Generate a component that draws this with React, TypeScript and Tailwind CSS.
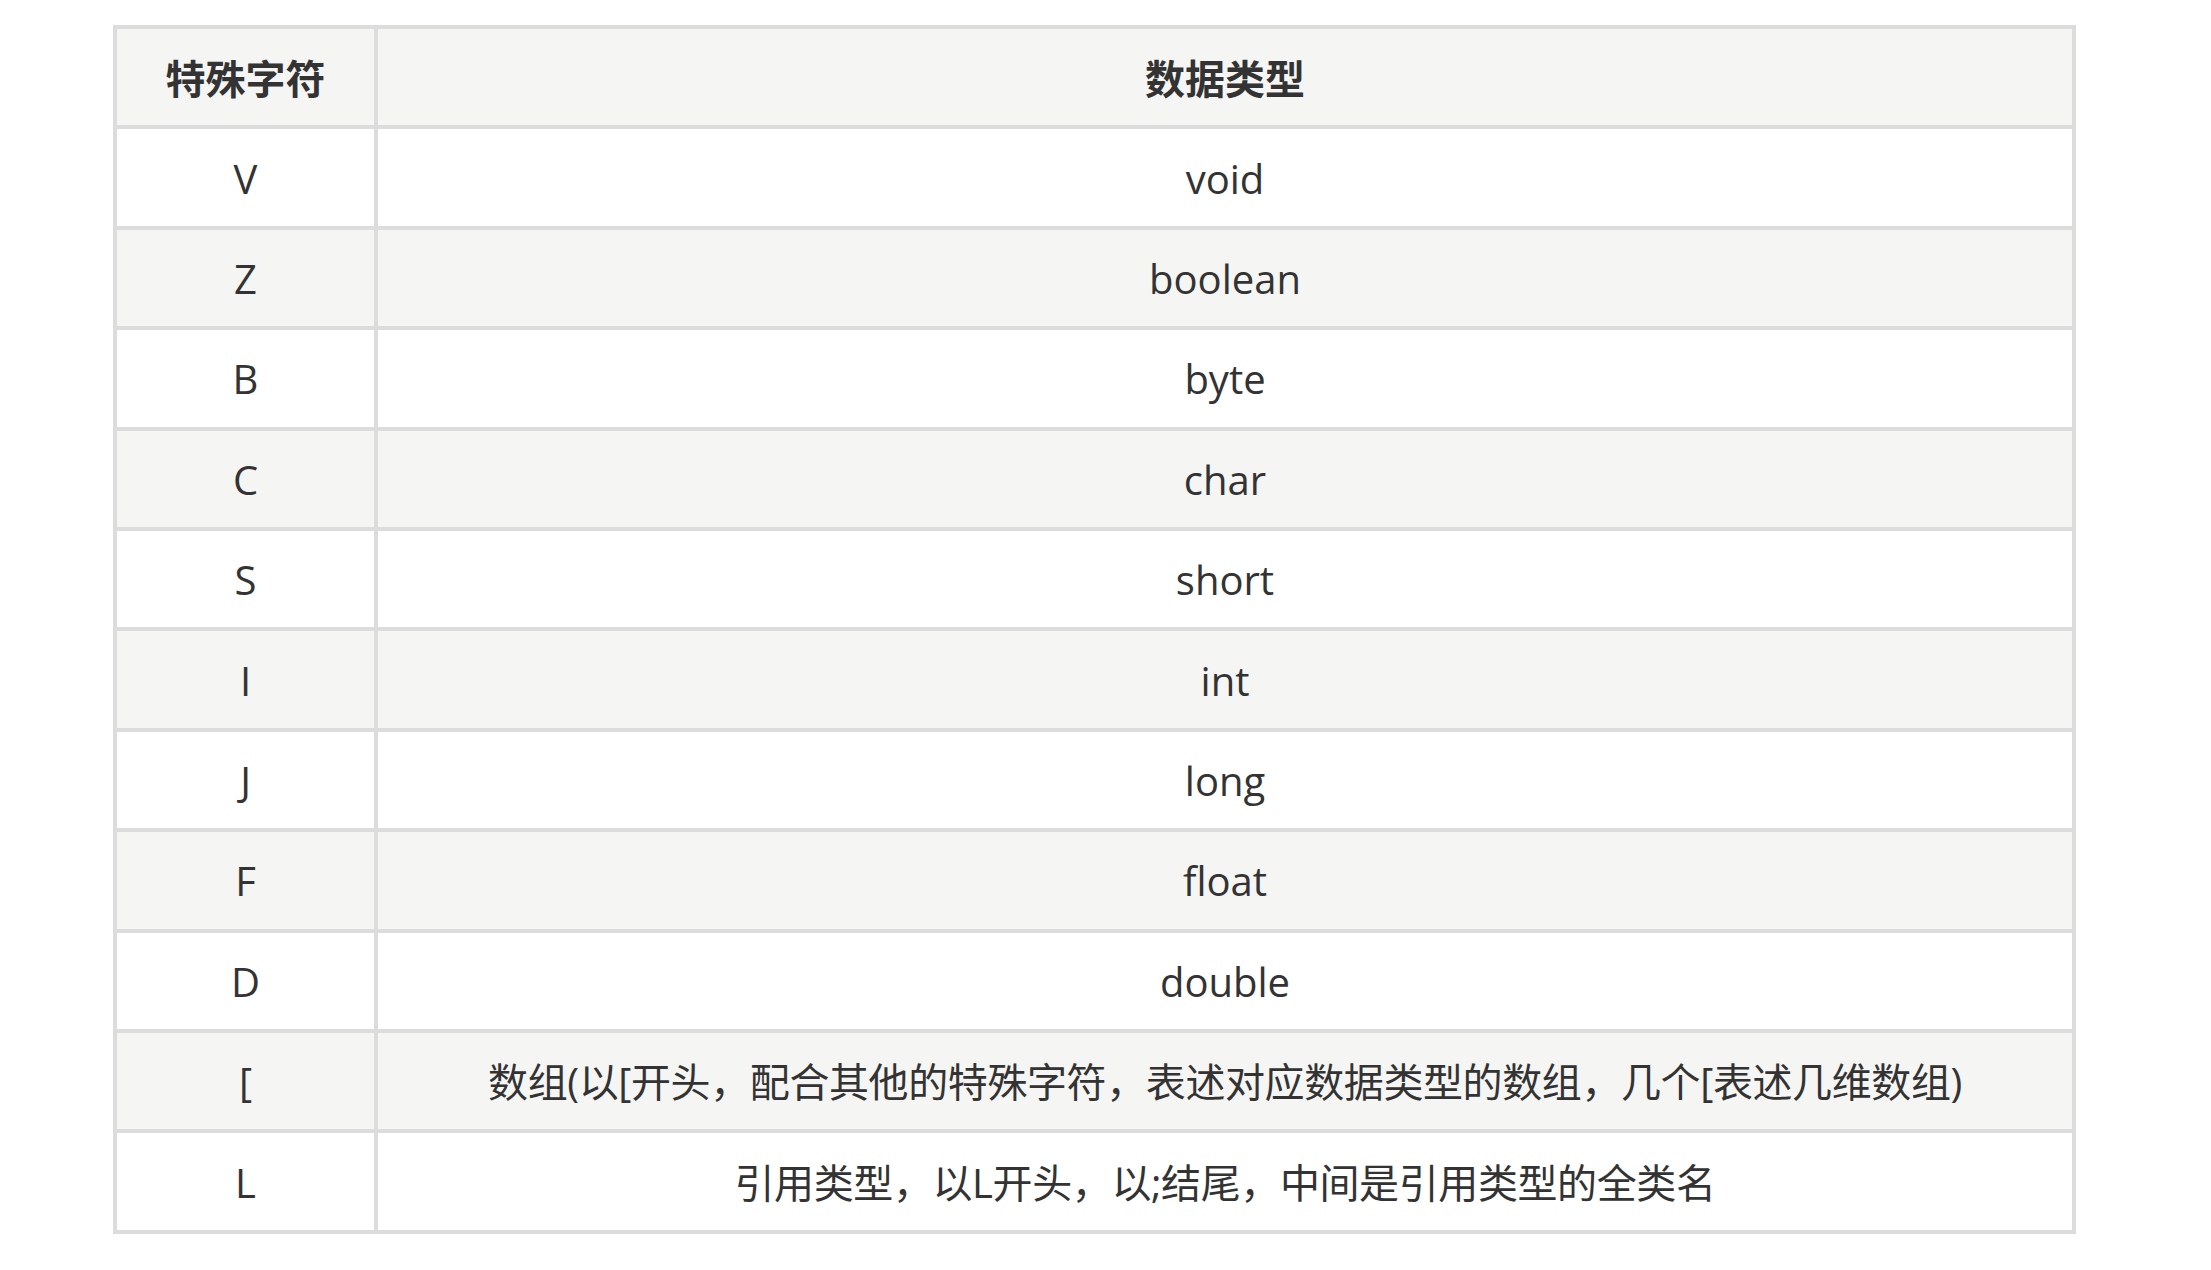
import React from "react";

const rows: [string, string][] = [
  ["V", "void"],
  ["Z", "boolean"],
  ["B", "byte"],
  ["C", "char"],
  ["S", "short"],
  ["I", "int"],
  ["J", "long"],
  ["F", "float"],
  ["D", "double"],
  ["[", "数组(以[开头，配合其他的特殊字符，表述对应数据类型的数组，几个[表述几维数组)"],
  ["L", "引用类型，以L开头，以;结尾，中间是引用类型的全类名"],
];

export default function App() {
  return (
    <div className="w-[2211px] h-[1270px] bg-white pt-[25px] pl-[113px]">
      <div
        className="w-[1963px] bg-[#dcdcdc] p-[4px] grid grid-cols-[257px_1694px] gap-[4px] grid-rows-[repeat(12,96.42px)] text-[#333333] text-[40px]"
        style={{ fontFamily: '"Open Sans", "Noto Sans CJK SC", sans-serif' }}
      >
        <div className="bg-[#f5f5f3] flex items-center justify-center font-bold pt-[4px]">特殊字符</div>
        <div className="bg-[#f5f5f3] flex items-center justify-center font-bold pt-[4px]">数据类型</div>
        {rows.map(([k, v], i) => {
          const bg = i % 2 === 0 ? "bg-white" : "bg-[#f5f5f3]";
          const cjk = i >= 9;
          return (
            <React.Fragment key={i}>
              <div className={`${bg} flex items-center justify-center pt-[2px]`}>{k}</div>
              <div
                className={`${bg} flex items-center justify-center whitespace-nowrap pt-[2px] ${
                  cjk ? "tracking-[-0.4px]" : ""
                }`}
              >
                {v}
              </div>
            </React.Fragment>
          );
        })}
      </div>
    </div>
  );
}
